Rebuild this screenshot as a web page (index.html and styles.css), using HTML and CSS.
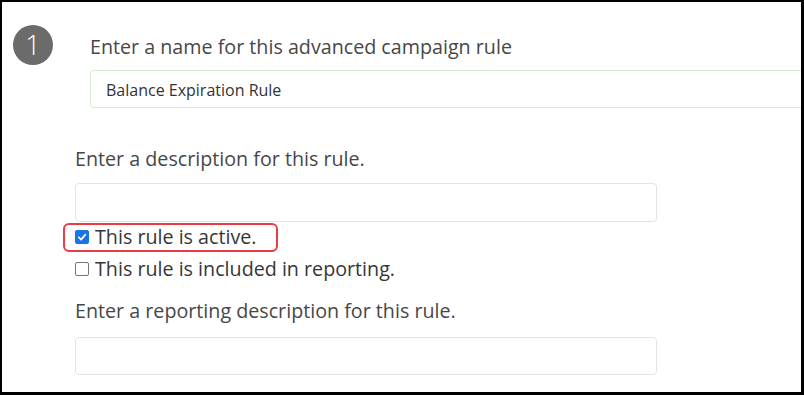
FILE: index.html
```html
<!DOCTYPE html>
<html>
<head>
<meta charset="utf-8">
<link rel="stylesheet" href="styles.css">
</head>
<body>
<div class="frame">
  <div class="step">
    <div class="badge">1</div>
    <div class="step-body">
      <div class="label">Enter a name for this advanced campaign rule</div>
      <div class="input input-name">Balance Expiration Rule</div>
    </div>
  </div>
  <div class="section">
    <div class="label">Enter a description for this rule.</div>
    <div class="input input-wide input-desc"></div>
    <label class="check highlight"><span class="box checked"><svg viewBox="0 0 14 14" width="14" height="14"><path d="M3.2 7.3 L5.9 10 L10.9 4.2" fill="none" stroke="#fff" stroke-width="2" stroke-linecap="round" stroke-linejoin="round"/></svg></span><span class="check-text">This rule is active.</span></label>
    <label class="check check-report"><span class="box"></span><span class="check-text">This rule is included in reporting.</span></label>
    <div class="label label-report">Enter a reporting description for this rule.</div>
    <div class="input input-wide input-report"></div>
  </div>
</div>
</body>
</html>
```
FILE: styles.css
```css
html, body {
  margin: 0;
  padding: 0;
  background: #000;
}
.frame {
  box-sizing: border-box;
  width: 804px;
  height: 395px;
  background: #fff;
  border-style: solid;
  border-color: #000;
  border-width: 2px 3px 3px 2px;
  overflow: hidden;
  font-family: "Open Sans", "Noto Sans", sans-serif;
  color: #474747;
}
.step {
  display: flex;
  padding: 23px 0 0 11px;
}
.badge {
  flex: none;
  width: 40px;
  height: 40px;
  border-radius: 50%;
  background: #6b6b6b;
  color: #fff;
  font-size: 27px;
  font-weight: 300;
  line-height: 40px;
  text-align: center;
}
.step-body {
  margin-left: 37px;
  flex: 1;
  min-width: 0;
  padding-top: 9px;
}
.label {
  font-size: 19.7px;
  line-height: 26px;
}
.input {
  box-sizing: border-box;
  height: 38px;
  border: 1px solid #e3e3e3;
  border-radius: 4px;
  background: #fff;
}
.input-name {
  margin-top: 10px;
  margin-right: -20px;
  border-color: #d6ecd0;
  font-size: 16px;
  line-height: 34px;
  padding: 2px 0 0 15px;
  color: #333;
}
.section {
  padding: 38px 0 0 73px;
}
.input-wide {
  width: 582px;
}
.input-desc {
  margin-top: 11px;
  height: 39px;
}
.check {
  display: flex;
  align-items: center;
  width: fit-content;
  font-size: 19.7px;
  line-height: 24px;
  color: #363636;
}
.highlight {
  margin: 1px 0 0 -12px;
  padding: 0 19px 1px 10px;
  border: 2px solid #ec3b42;
  border-radius: 6px;
}
.check-report {
  margin-top: 5px;
}
.box {
  box-sizing: border-box;
  width: 14px;
  height: 14px;
  border: 1px solid #767676;
  border-radius: 2px;
  margin-right: 6px;
  display: flex;
  align-items: center;
  justify-content: center;
  background: #fff;
}
.box.checked {
  background: #1a73e8;
  border-color: #1a73e8;
}
.box.checked svg {
  width: 12px;
  height: 12px;
}
.label-report {
  margin-top: 17px;
}
.input-report {
  margin-top: 13px;
}
```
